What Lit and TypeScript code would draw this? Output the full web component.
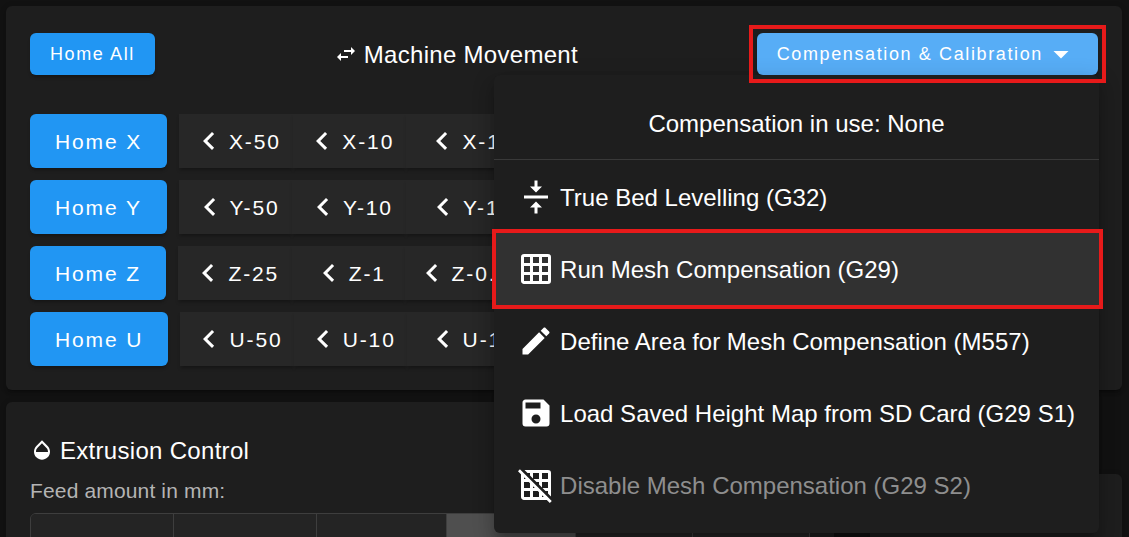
import { LitElement, html, css, svg } from "lit";
import { customElement, property } from "lit/decorators.js";
import { classMap } from "lit/directives/class-map.js";

const icons: Record<string, string> = {
  swap: "M21,9L17,5V8H10V10H17V13M7,11L3,15L7,19V16H14V14H7V11Z",
  left: "M15.41,16.58L10.83,12L15.41,7.41L14,6L8,12L14,18L15.41,16.58Z",
  right: "M8.59,16.58L13.17,12L8.59,7.41L10,6L16,12L10,18L8.59,16.58Z",
  down: "M7,10L12,15L17,10H7Z",
  level: "M8,19H11V23H13V19H16L12,15L8,19M16,5H13V1H11V5H8L12,9L16,5M4,11V13H20V11H4Z",
  grid: "M10,4V8H14V4H10M16,4V8H20V4H16M16,10V14H20V10H16M16,16V20H20V16H16M14,20V16H10V20H14M8,20V16H4V20H8M8,14V10H4V14H8M8,8V4H4V8H8M10,14H14V10H10V14M4,2H20A2,2 0 0,1 22,4V20A2,2 0 0,1 20,22H4C2.92,22 2,21.1 2,20V4A2,2 0 0,1 4,2Z",
  pencil: "M20.71,7.04C21.1,6.65 21.1,6 20.71,5.63L18.37,3.29C18,2.9 17.35,2.9 16.96,3.29L15.12,5.12L18.87,8.87M3,17.25V21H6.75L17.81,9.93L14.06,6.18L3,17.25Z",
  save: "M15,9H5V5H15M12,19A3,3 0 0,1 9,16A3,3 0 0,1 12,13A3,3 0 0,1 15,16A3,3 0 0,1 12,19M17,3H5C3.89,3 3,3.9 3,5V19A2,2 0 0,0 5,21H19A2,2 0 0,0 21,19V7L17,3Z",
  gridOff: "M0,2.77L1.28,1.5L22.5,22.72L21.23,24L19.23,22H4C2.92,22 2,21.1 2,20V4.77L0,2.77M10,4V7.68L8,5.68V4H6.32L4.32,2H20A2,2 0 0,1 22,4V19.7L20,17.7V16H18.32L16.32,14H20V10H16V13.68L14,11.68V10H12.32L10.32,8H14V4H10M16,4V8H20V4H16M16,20H17.23L16,18.77V20M4,8H5.23L4,6.77V8M10,14H11.23L10,12.77V14M14,20V16.77L13.23,16H10V20H14M8,20V16H4V20H8M8,14V10.77L7.23,10H4V14H8Z",
  opacity: "M17.66,8L12,2.35L6.34,8C4.78,9.56 4,11.64 4,13.64C4,15.64 4.78,17.75 6.34,19.31C7.9,20.87 9.95,21.66 12,21.66C14.05,21.66 16.1,20.87 17.66,19.31C19.22,17.75 20,15.64 20,13.64C20,11.64 19.22,9.56 17.66,8M6,14C6,12 6.62,10.73 7.76,9.6L12,5.27L16.24,9.65C17.38,10.77 18,12 18,14H6Z",
};

@customElement("mdi-icon")
class MdiIcon extends LitElement {
  @property() name = "";
  static styles = css`
    :host { display: block; flex: none; width: 36px; height: 36px; }
    :host([small]) { width: 24px; height: 24px; }
    svg { display: block; width: 100%; height: 100%; fill: #fff; }
  `;
  render() {
    return html`<svg viewBox="0 0 24 24" aria-hidden="true">${svg`<path d=${icons[this.name]}></path>`}</svg>`;
  }
}

const axes = [
  { axis: "X", steps: ["50", "10", "1", "0.1"] },
  { axis: "Y", steps: ["50", "10", "1", "0.1"] },
  { axis: "Z", steps: ["25", "1", "0.1", "0.01"] },
  { axis: "U", steps: ["50", "10", "1", "0.1"] },
];

const menuItems = [
  { icon: "level", label: "True Bed Levelling (G32)" },
  { icon: "grid", label: "Run Mesh Compensation (G29)", active: true },
  { icon: "pencil", label: "Define Area for Mesh Compensation (M557)" },
  { icon: "save", label: "Load Saved Height Map from SD Card (G29 S1)" },
  { icon: "gridOff", label: "Disable Mesh Compensation (G29 S2)", disabled: true },
];

const feeds = ["200", "100", "50", "20", "5", "1"];

@customElement("app-root")
class AppRoot extends LitElement {
  static styles = css`
    :host {
      display: block;
      box-sizing: border-box;
      height: 100vh;
      overflow: hidden;
      padding: 6px 7px 0 6px;
      background: #121212;
      color: #fff;
      font: 24px/36px "Liberation Sans", Arial, sans-serif;
    }
    * { box-sizing: border-box; }
    button {
      margin: 0;
      border: 0;
      font: inherit;
      color: #fff;
      white-space: nowrap;
    }
    h2, p { margin: 0; font-weight: 400; }
    .card {
      border-radius: 6px;
      background: #1e1e1e;
      padding: 27px 24px 24px;
      box-shadow: 0 4px 2px -3px rgba(0, 0, 0, 0.2), 0 3px 3px rgba(0, 0, 0, 0.14), 0 1px 7px rgba(0, 0, 0, 0.12);
    }
    .bar { display: flex; justify-content: space-between; align-items: center; }
    .title { display: flex; align-items: center; gap: 6px; padding-top: 2px; font-size: 24px; letter-spacing: 0.0125em; }
    .title mdi-icon, .item mdi-icon, .move mdi-icon { margin-bottom: 2px; }
    .btn {
      display: flex;
      align-items: center;
      justify-content: center;
      height: 54px;
      padding: 2px 25px 0;
      border-radius: 6px;
      background: #2196f3;
      font-size: 21px;
      letter-spacing: 0.09em;
      box-shadow: 0 4px 2px -3px rgba(0, 0, 0, 0.2), 0 3px 3px rgba(0, 0, 0, 0.14);
    }
    .small { height: 42px; padding: 0 20px; font-size: 18px; }
    .open { padding-right: 19px; background: #57adf6; }
    .anchor { position: relative; }
    .callout {
      position: absolute;
      z-index: 3;
      inset: -8px;
      border: 4px solid #e71a1a;
      pointer-events: none;
    }
    .callout.item-mark { inset: -4px -4px -4px -2px; }
    .axes { display: flex; flex-direction: column; gap: 12px; margin-top: 39px; }
    .axis { display: flex; gap: 12px; }
    .group { display: flex; flex: 1 1 0; min-width: 0; }
    .move {
      flex: 1 1 0;
      min-width: 0;
      gap: 2px;
      padding: 2px 0 0;
      border-radius: 0;
      background: #272727;
    }
    .menu {
      position: absolute;
      z-index: 2;
      top: 100%;
      right: -1px;
      width: max-content;
      padding: 12px 0;
      border-radius: 6px;
      background: #1e1e1e;
      box-shadow: 0 8px 8px -5px rgba(0, 0, 0, 0.2), 0 12px 15px 2px rgba(0, 0, 0, 0.14), 0 5px 21px 3px rgba(0, 0, 0, 0.12);
    }
    .status { display: flex; align-items: center; justify-content: center; height: 72px; padding-top: 2px; }
    .divider { height: 1px; margin: 0 0 1px; border: 0; background: #393939; }
    .slot { position: relative; }
    .item {
      display: flex;
      align-items: center;
      gap: 6px;
      width: 100%;
      height: 72px;
      padding: 2px 24px 0;
      background: none;
      text-align: left;
    }
    .item.active { background: #313131; }
    .item:disabled { color: #8e8e8e; }
    .lower { display: grid; grid-template-columns: 23fr 7fr; gap: 36px; margin-top: 12px; align-items: start; }
    .extrusion { padding-top: 29px; }
    .caption { margin-top: 4px; font-size: 21px; line-height: 36px; letter-spacing: 0.0071em; color: #b4b4b4; }
    .feeds { display: flex; margin-top: 4px; border: 1px solid #3e3e3e; border-radius: 6px; overflow: hidden; }
    .feed {
      flex: 1 1 auto;
      height: 72px;
      padding: 0 18px;
      background: #242424;
      border-right: 1px solid #3e3e3e;
      font-size: 24px;
    }
    .feed:last-child { border-right: 0; }
    .feed.on { background: #4f4f4f; }
    .side { margin-top: 72px; height: 240px; }
  `;

  render() {
    return html`
      <section class="card">
        <div class="bar">
          <button class="btn small">Home All</button>
          <h2 class="title"><mdi-icon small name="swap"></mdi-icon>Machine Movement</h2>
          <div class="anchor">
            <button class="btn small open" aria-haspopup="menu" aria-expanded="true">
              Compensation &amp; Calibration<mdi-icon name="down"></mdi-icon>
            </button>
            <div class="callout"></div>
            <div class="menu" role="menu">
              <div class="status">Compensation in use: None</div>
              <hr class="divider" />
              ${menuItems.map(
                (m) => html`<div class="slot">
                  <button class=${classMap({ item: true, active: !!m.active })} role="menuitem" ?disabled=${!!m.disabled}>
                    <mdi-icon name=${m.icon}></mdi-icon>${m.label}
                  </button>
                  ${m.active ? html`<div class="callout item-mark"></div>` : ""}
                </div>`
              )}
            </div>
          </div>
        </div>
        <div class="axes">
          ${axes.map(
            ({ axis, steps }) => html`<div class="axis">
              <button class="btn">Home ${axis}</button>
              <div class="group">
                ${steps.map((s) => html`<button class="btn move"><mdi-icon name="left"></mdi-icon>${axis}-${s}</button>`)}
              </div>
              <div class="group">
                ${[...steps].reverse().map((s) => html`<button class="btn move">${axis}+${s}<mdi-icon name="right"></mdi-icon></button>`)}
              </div>
            </div>`
          )}
        </div>
      </section>
      <div class="lower">
        <section class="card extrusion">
          <h2 class="title"><mdi-icon small name="opacity"></mdi-icon>Extrusion Control</h2>
          <p class="caption">Feed amount in mm:</p>
          <div class="feeds">
            ${feeds.map(
              (f, i) => html`<button
                class=${classMap({ feed: true, on: i === 3 })}
                style="flex-basis: calc(${f.length}ch + 36px)"
                aria-label=${f + " mm"}
              ></button>`
            )}
          </div>
        </section>
        <section class="card side"></section>
      </div>
    `;
  }
}
